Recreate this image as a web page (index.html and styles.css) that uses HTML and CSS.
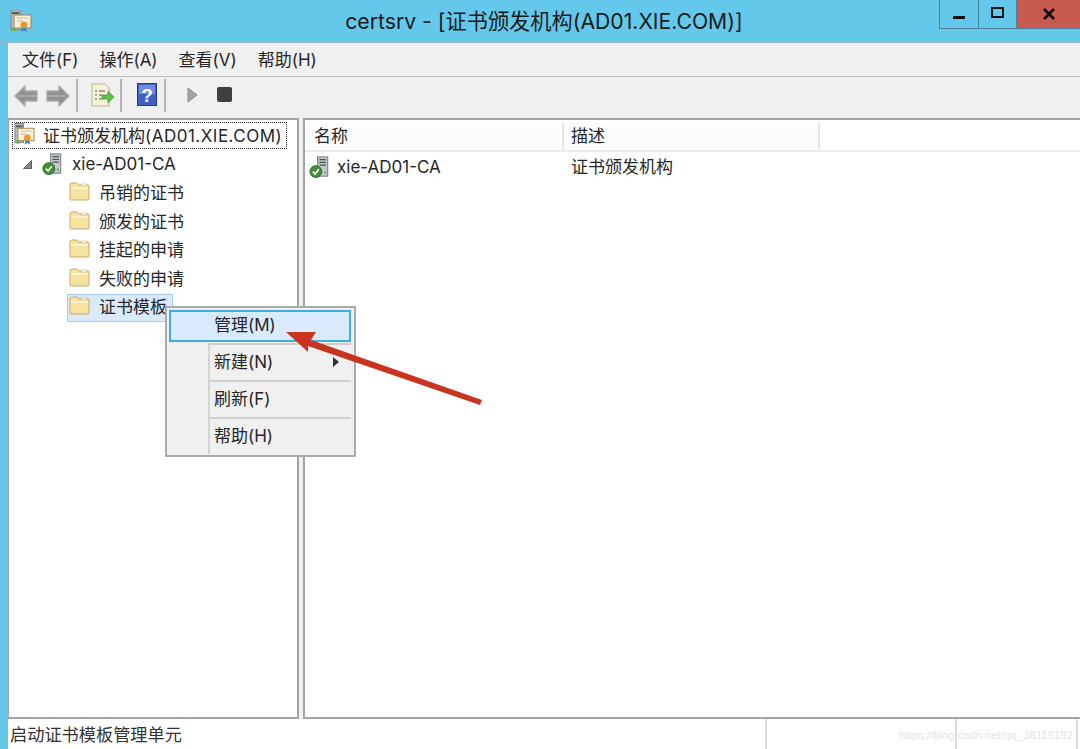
FILE: index.html
```html
<!DOCTYPE html>
<html lang="zh-CN">
<head>
  <meta charset="UTF-8" />
  <title>certsrv</title>
  <link rel="stylesheet" href="styles.css">
</head>
<body>
  <svg class="defs" width="0" height="0">
    <defs>
      <symbol id="cert" viewBox="0 0 22 22">
        <rect x="1" y="0" width="9" height="20" fill="#b9bdc2" stroke="#7c8085"/>
        <rect x="2" y="2" width="7" height="2" fill="#55595e"/>
        <rect x="4" y="5" width="17" height="13" fill="#f6efdc" stroke="#a5824d"/>
        <path d="M7 8h11M7 11h6" stroke="#c9bda0"/>
        <circle cx="14" cy="15" r="3.5" fill="#e19a2b"/>
        <path d="M12 18l-1 4 3-1.5 3 1.5-1-4z" fill="#3f7fc4"/>
        <rect x="2" y="18" width="4" height="3" fill="#6fae55"/>
      </symbol>
      <symbol id="server" viewBox="0 0 22 24">
        <rect x="9" y="1" width="11" height="21" fill="#c4c8cc" stroke="#6d7176"/>
        <path d="M11 4h7M11 7h7M11 10h7" stroke="#4c5055" stroke-width="1.4"/>
        <rect x="16" y="17" width="2" height="2" fill="#58b04a"/>
        <circle cx="7" cy="17" r="6.5" fill="#3f8f35" stroke="#2b6b27"/>
        <path d="M3.8 17l2.4 2.6 4-5" fill="none" stroke="#fff" stroke-width="1.8"/>
      </symbol>
      <symbol id="folder" viewBox="0 0 21 19">
        <path d="M1 3q0-2 2-2h5l2 2h9q1 0 1 1v13q0 1-1 1H2q-1 0-1-1z" fill="#f7e3a1" stroke="#c9ab6c"/>
        <path d="M12 2h6v2h-6z" fill="#fff" stroke="#c9ab6c" stroke-width=".6"/>
        <path d="M2 5h17v2H2z" fill="#fdf3cf"/>
      </symbol>
      <symbol id="nav-arrow" viewBox="0 0 24 22">
        <path d="M1 11L11 1v5h12v10H11v5z" fill="#8f9192" stroke="#a9abab" stroke-width="1.4" stroke-linejoin="round"/>
        <path d="M4 10h18v2H4z" fill="#a7a9a9"/>
      </symbol>
    </defs>
  </svg>

  <div class="window">
    <header class="titlebar">
      <svg class="title-icon"><use href="#cert"/></svg>
      <div class="title">certsrv - [证书颁发机构(AD01.XIE.COM)]</div>
      <div class="win-buttons">
        <div class="win-btn win-min"><span class="min-glyph"></span></div>
        <div class="win-btn win-max"><span class="max-glyph"></span></div>
        <div class="win-btn win-close">
          <svg width="12" height="12" viewBox="0 0 12 12"><path d="M1 1l10 10M11 1L1 11" stroke="#111" stroke-width="2.8"/></svg>
        </div>
      </div>
    </header>

    <div class="main">
      <nav class="menubar">
        <span>文件(F)</span>
        <span>操作(A)</span>
        <span>查看(V)</span>
        <span>帮助(H)</span>
      </nav>

      <div class="toolbar">
        <svg class="tool-back" width="24" height="22"><use href="#nav-arrow"/></svg>
        <svg class="tool-forward" width="24" height="22"><use href="#nav-arrow"/></svg>
        <i class="tool-sep sep-a"></i>
        <svg class="tool-export" width="24" height="24" viewBox="0 0 24 24">
          <path d="M1 1h13l4 4v18H1z" fill="#f7f3d8" stroke="#b5b09a"/>
          <path d="M4 8h2M8 8h6M4 12h2M8 12h3M4 16h2M8 16h3" stroke="#5b5b50" stroke-width="1.2"/>
          <path d="M11 12h6V8l6 6-6 6v-4h-6z" fill="#5cc04e" stroke="#3c9a35" stroke-width=".7"/>
        </svg>
        <i class="tool-sep sep-b"></i>
        <svg class="tool-help" width="20" height="23" viewBox="0 0 20 23">
          <rect x=".5" y=".5" width="19" height="22" fill="#3f5fc4" stroke="#24398a"/>
          <rect x="2" y="2" width="16" height="9" fill="#6f8ce0"/>
          <text x="10" y="18.5" text-anchor="middle" class="help-mark">?</text>
        </svg>
        <i class="tool-sep sep-c"></i>
        <svg class="tool-play" width="11" height="16" viewBox="0 0 11 16"><path d="M1 1l9 7-9 7z" fill="#a2a4a4" stroke="#8b8d8d"/></svg>
        <span class="tool-stop"></span>
      </div>

      <div class="panes">
        <aside class="tree">
          <div class="tree-root"><svg class="row-icon"><use href="#cert"/></svg><span>证书颁发机构<span class="root-host">(AD01.XIE.COM)</span></span></div>
          <div class="tree-row tree-ca">
            <svg class="twisty" width="9" height="9" viewBox="0 0 9 9"><path d="M8.5 .5v8h-8z" fill="#8a8a8a" stroke="#444" stroke-width=".8"/></svg>
            <svg class="row-icon"><use href="#server"/></svg>
            <span>xie-AD01-CA</span>
          </div>
          <div class="tree-row tree-leaf"><svg class="folder-icon"><use href="#folder"/></svg>吊销的证书</div>
          <div class="tree-row tree-leaf"><svg class="folder-icon"><use href="#folder"/></svg>颁发的证书</div>
          <div class="tree-row tree-leaf"><svg class="folder-icon"><use href="#folder"/></svg>挂起的申请</div>
          <div class="tree-row tree-leaf"><svg class="folder-icon"><use href="#folder"/></svg>失败的申请</div>
          <div class="tree-row tree-leaf is-selected"><svg class="folder-icon"><use href="#folder"/></svg>证书模板</div>
        </aside>

        <section class="list">
          <div class="list-head">
            <div class="col col-name">名称</div>
            <div class="col col-desc">描述</div>
          </div>
          <div class="list-row">
            <div class="cell-name"><svg class="row-icon"><use href="#server"/></svg>xie-AD01-CA</div>
            <div class="cell-desc">证书颁发机构</div>
          </div>
        </section>
      </div>

      <footer class="statusbar">
        <div class="status-text">启动证书模板管理单元</div>
        <div class="status-cell cell-wide"></div>
        <div class="status-cell cell-end"></div>
      </footer>
    </div>
  </div>

  <div class="context-menu">
    <div class="menu-item is-active"><span>管理(M)</span></div>
    <div class="menu-item"><span>新建(N)</span><i class="submenu-arrow"></i></div>
    <div class="menu-item"><span>刷新(F)</span></div>
    <div class="menu-item"><span>帮助(H)</span></div>
  </div>

  <svg class="red-arrow" width="210" height="90" viewBox="0 0 210 90">
    <path d="M6 12L36 12L31 20L202 80L200 85L28 26L28 32Z" fill="#c93421"/>
  </svg>

  <div class="watermark">https://blog.csdn.net/qq_36119192</div>
</body>
</html>
```

FILE: styles.css
```css
* {
  box-sizing: border-box;
}

html, body {
  margin: 0;
  height: 749px;
  overflow: hidden;
}

body {
  position: relative;
  font-family: Inter, "Noto Sans CJK SC", sans-serif;
  font-size: 17px;
  color: #262626;
  background-color: #63c8ea;
}

.defs {
  position: absolute;
}

.window {
  display: flex;
  flex-direction: column;
  height: 749px;
}

/* title bar */
.titlebar {
  position: relative;
  height: 43px;
  flex: none;
  display: flex;
  justify-content: center;
  padding-top: 7px;
  border-bottom: 1px solid #8fb6c9;
}

.title-icon {
  position: absolute;
  left: 10px;
  top: 10px;
  width: 22px;
  height: 22px;
}

.title {
  font-size: 21.2px;
  line-height: 28px;
  color: #1a1a1a;
  margin-left: 8px;
  white-space: nowrap;
}

.win-buttons {
  position: absolute;
  right: 0;
  top: 0;
  display: flex;
  height: 29px;
}

.win-btn {
  display: flex;
  align-items: center;
  justify-content: center;
  border-bottom: 1px solid #4c8196;
  border-left: 1px solid #4c8196;
}

.win-min {
  width: 39px;
}

.win-max {
  width: 38px;
}

.win-close {
  width: 64px;
  background-color: #c75b50;
}

.min-glyph {
  width: 12px;
  height: 3px;
  background-color: #111;
  margin-top: 7px;
}

.max-glyph {
  width: 13px;
  height: 11px;
  border: 2px solid #111;
  margin-bottom: 3px;
}

/* main area */
.main {
  flex: 1;
  margin-left: 8px;
  display: flex;
  flex-direction: column;
  background-color: #f0f0f0;
  min-height: 0;
}

.menubar {
  height: 34px;
  flex: none;
  display: flex;
  align-items: center;
  gap: 21px;
  padding-left: 14px;
  padding-bottom: 2px;
  border-bottom: 1px solid #bdbdbd;
}

.toolbar {
  position: relative;
  height: 41px;
  flex: none;
}

.toolbar > * {
  position: absolute;
}

.tool-back {
  left: 6px;
  top: 8px;
}

.tool-forward {
  left: 38px;
  top: 8px;
  transform: scaleX(-1);
}

.tool-sep {
  top: 2px;
  width: 2px;
  height: 33px;
  background-color: #b4b4b4;
}

.sep-a {
  left: 68px;
}

.sep-b {
  left: 112px;
}

.sep-c {
  left: 156px;
}

.tool-export {
  left: 83px;
  top: 6px;
}

.tool-help {
  left: 129px;
  top: 6px;
}

.help-mark {
  font-family: "Liberation Sans", sans-serif;
  font-size: 19px;
  font-weight: bold;
  fill: #fff;
}

.tool-play {
  left: 179px;
  top: 10px;
}

.tool-stop {
  left: 209px;
  top: 10px;
  width: 15px;
  height: 15px;
  border-radius: 2px;
  background-color: #3f3f3f;
}

/* panes */
.panes {
  flex: 1;
  display: flex;
  gap: 4px;
  min-height: 0;
}

.tree {
  width: 291px;
  flex: none;
  padding: 2px 0 0 3px;
  background-color: #fff;
  border: 2px solid #a3a3a3;
  border-left-width: 1px;
}

.tree-root {
  display: flex;
  align-items: center;
  gap: 8px;
  width: 275px;
  height: 27px;
  margin-bottom: 1px;
  padding-left: 1px;
  padding-bottom: 3px;
  white-space: nowrap;
  border: 1px dotted #222;
}

.root-host {
  letter-spacing: 0.5px;
}

.tree-row {
  display: flex;
  align-items: center;
  height: 28.5px;
  padding-bottom: 2px;
  white-space: nowrap;
}

.tree-ca {
  padding-left: 11px;
  padding-bottom: 0;
}

.twisty {
  margin-right: 10px;
}

.row-icon {
  width: 21px;
  height: 22px;
  flex: none;
}

.tree-ca .row-icon {
  margin-right: 9px;
}

.tree-leaf {
  width: 106px;
  margin-left: 55px;
  padding-left: 2px;
  gap: 9px;
}

.folder-icon {
  width: 21px;
  height: 19px;
  flex: none;
}

.tree-leaf.is-selected {
  margin-top: 1px;
  padding-left: 1px;
  padding-bottom: 4px;
  background-color: #d9eafc;
  border: 1px solid #a9cdee;
  overflow: hidden;
}

.list {
  flex: 1;
  background-color: #fff;
  border-top: 2px solid #a3a3a3;
  border-bottom: 2px solid #a3a3a3;
  border-left: 2px solid #a3a3a3;
  padding-top: 2px;
}

.list-head {
  display: flex;
  height: 30px;
  border-bottom: 2px solid #ececec;
}

.col {
  height: 28px;
  line-height: 28px;
  background-color: #fcfcfc;
  border-right: 2px solid #e6e6e6;
}

.col-name {
  width: 259px;
  padding-left: 9px;
}

.col-desc {
  width: 256px;
  padding-left: 7px;
}

.list-row {
  display: flex;
  align-items: center;
  height: 30px;
}

.cell-name {
  display: flex;
  align-items: center;
  gap: 7px;
  width: 266px;
  padding-left: 4px;
}

.cell-desc {
  margin-bottom: 3px;
}

/* status bar */
.statusbar {
  height: 30px;
  flex: none;
  display: flex;
  background-color: #fff;
  color: #333;
}

.status-text {
  width: 757px;
  padding-left: 2px;
  font-size: 17.2px;
  line-height: 32px;
  white-space: nowrap;
}

.status-cell {
  border-left: 2px solid #dcdcdc;
}

.cell-wide {
  width: 190px;
}

.cell-end {
  width: 123px;
  border-right: 2px solid #dcdcdc;
}

/* context menu */
.context-menu {
  position: absolute;
  left: 165px;
  top: 306px;
  width: 191px;
  height: 151px;
  padding: 2px 3px 2px 2px;
  background-color: #f0f0f0;
  border: 2px solid #ababab;
}

.menu-item {
  position: relative;
  height: 37px;
  line-height: 34px;
  border-top: 2px solid #cfcfcf;
  margin-left: 39px;
  padding-left: 4px;
  border-left: 2px solid #d4d4d4;
}

.menu-item.is-active {
  height: 32px;
  margin: 0 0 1px;
  padding-left: 43px;
  line-height: 26px;
  background-color: #d9eafc;
  border: 2px solid #3eaee0;
}

.submenu-arrow {
  position: absolute;
  right: 12px;
  top: 12px;
  border-left: 6px solid #333;
  border-top: 5px solid transparent;
  border-bottom: 5px solid transparent;
}

.red-arrow {
  position: absolute;
  left: 280px;
  top: 320px;
}

.watermark {
  position: absolute;
  right: 7px;
  top: 729px;
  font-family: "Liberation Sans", sans-serif;
  font-size: 11.4px;
  color: #e4e4e4;
}
```
